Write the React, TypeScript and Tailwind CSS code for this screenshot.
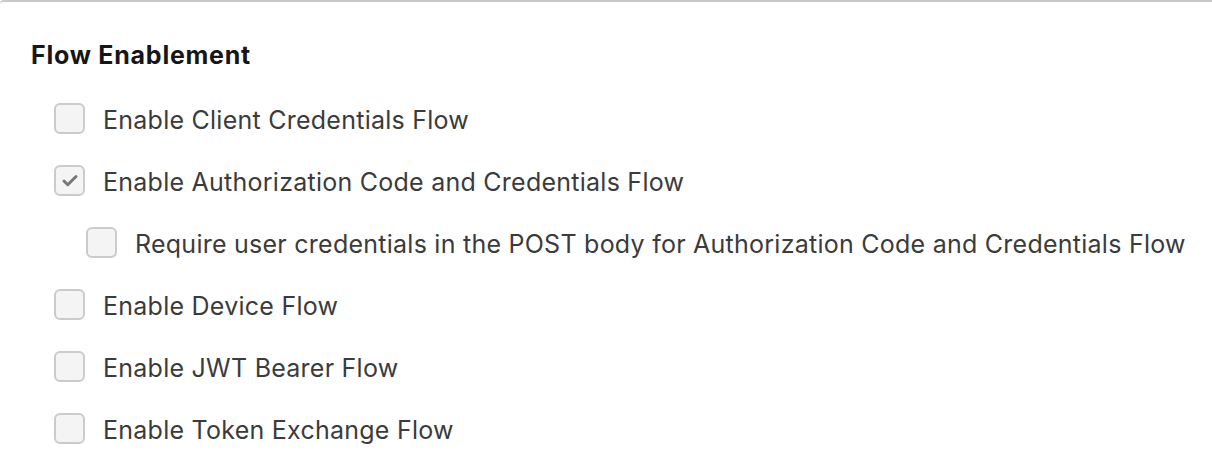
import { Check } from 'lucide-react';

type Flow = { label: string; checked?: boolean; nested?: boolean };

const flows: Flow[] = [
  { label: 'Enable Client Credentials Flow' },
  { label: 'Enable Authorization Code and Credentials Flow', checked: true },
  {
    label: 'Require user credentials in the POST body for Authorization Code and Credentials Flow',
    nested: true,
  },
  { label: 'Enable Device Flow' },
  { label: 'Enable JWT Bearer Flow' },
  { label: 'Enable Token Exchange Flow' },
];

function FlowCheckbox({ flow }: { flow: Flow }) {
  return (
    <label className={`flex items-center gap-[18px] h-[31px] ${flow.nested ? 'pl-[86px]' : 'pl-[54px]'}`}>
      <span className="w-[31px] h-[31px] shrink-0 rounded-[6px] border-2 border-[#cbcbcb] bg-[#f4f4f4] flex items-center justify-center">
        {flow.checked && <Check className="w-[18px] h-[18px] text-[#777777]" strokeWidth={4} />}
      </span>
      <span className="pt-[3px] text-[25px] leading-none tracking-[0.25px] text-[#3b3b3b] whitespace-nowrap">{flow.label}</span>
    </label>
  );
}

export default function App() {
  return (
    <div className="w-[1212px] h-[474px] bg-white overflow-hidden" style={{ fontFamily: 'Inter, "Noto Sans", sans-serif' }}>
      <div className="border-t-2 border-[#c8c8c8] rounded-tl-[4px] h-full">
        {/* Flow Enablement section */}
        <h2 className="pl-[31px] pt-[38px] text-[25px] leading-[30px] tracking-[0.75px] font-bold text-[#161616]">Flow Enablement</h2>
        <div className="mt-[33px] flex flex-col gap-[31px]">
          {flows.map((f) => (
            <FlowCheckbox key={f.label} flow={f} />
          ))}
        </div>
      </div>
    </div>
  );
}
